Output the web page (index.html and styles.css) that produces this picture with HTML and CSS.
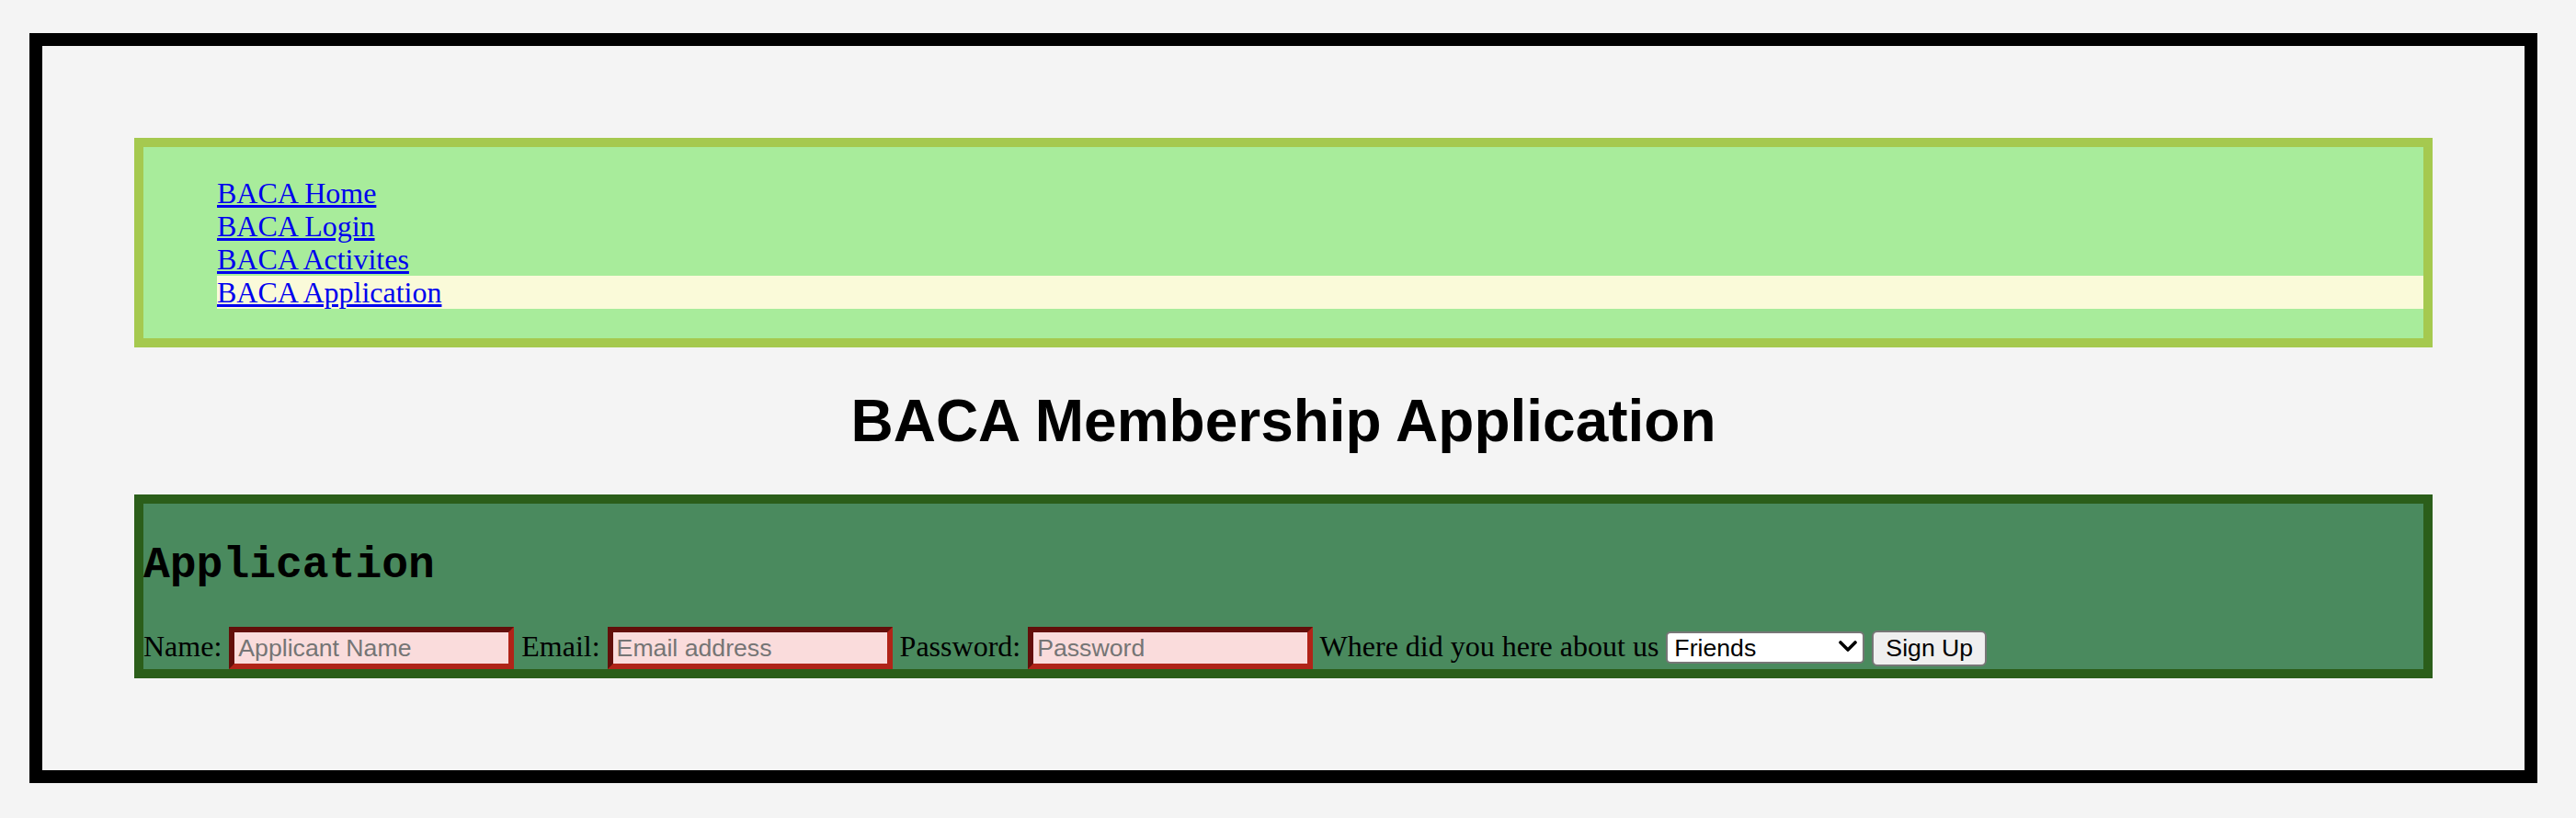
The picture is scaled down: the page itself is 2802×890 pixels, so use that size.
FILE: index.html
```html
<!DOCTYPE html>
<html lang="en">
<head>
<meta charset="utf-8">
<title>BACA Membership Application</title>
<link rel="stylesheet" href="styles.css">
</head>
<body>
<div class="page">
  <nav class="nav">
    <ul class="nav-list">
      <li class="nav-item"><a href="#">BACA Home</a></li>
      <li class="nav-item"><a href="#">BACA Login</a></li>
      <li class="nav-item"><a href="#">BACA Activites</a></li>
      <li class="nav-item nav-item-active"><a href="#">BACA Application</a></li>
    </ul>
  </nav>
  <h1 class="title">BACA Membership Application</h1>
  <section class="form-box">
    <h2 class="form-title">Application</h2>
    <form class="form-row">Name: <input class="field" type="text" placeholder="Applicant Name"> Email: <input class="field" type="email" placeholder="Email address"> Password: <input class="field" type="password" placeholder="Password"> Where did you here about us <span class="select-wrap"><select class="select"><option>Friends</option><option>Family</option><option>Internet</option></select><svg class="chevron" width="20" height="12" viewBox="0 0 20 12"><path d="M2 2 L10 10 L18 2" fill="none" stroke="#000" stroke-width="3.6" stroke-linecap="round" stroke-linejoin="round"/></svg></span> <button class="btn" type="button">Sign Up</button></form>
  </section>
</div>
</body>
</html>
```

FILE: styles.css
```css
html, body {
  margin: 0;
  padding: 0;
  background: #f4f4f4;
}

body {
  font-family: "Liberation Serif", "Times New Roman", serif;
  font-size: 32px;
  color: #000;
}

.page {
  margin: 36px 42px 38px 32px;
  border: 14px solid #000;
  padding: 100px;
}

.nav {
  background: #a8ec9b;
  border: 10px solid #a5c94f;
}

.nav-list {
  list-style: none;
  margin: 32px 0;
  padding: 0 0 0 80px;
}

.nav-item {
  line-height: 36px;
}

.nav-item a {
  color: #0000ee;
  text-decoration: underline;
}

.nav-item-active {
  background: #fafad9;
}

.title {
  font-family: "Liberation Sans", Arial, sans-serif;
  font-weight: bold;
  font-size: 64px;
  line-height: 74px;
  margin: 43px 0;
  text-align: center;
}

.form-box {
  background: #4a8a5e;
  border: 10px solid #2b5e1a;
}

.form-title {
  font-family: "Liberation Mono", "Courier New", monospace;
  font-weight: bold;
  font-size: 48px;
  line-height: 54px;
  margin: 40px 0;
}

.form-row {
  margin: 0;
  line-height: normal;
}

.field {
  box-sizing: border-box;
  width: 310px;
  height: 46px;
  padding: 2px 4px;
  margin: 0;
  border: 6px inset #b22222;
  border-top-color: #630f0a;
  border-left-color: #630f0a;
  border-right-color: #b02418;
  border-bottom-color: #b02418;
  border-style: solid;
  background: #fadcdc;
  font-family: "Liberation Sans", Arial, sans-serif;
  font-size: 26.67px;
  color: #000;
  vertical-align: baseline;
}

.field::placeholder {
  color: #757575;
}

.select-wrap {
  position: relative;
  display: inline-block;
}

.select {
  -webkit-appearance: none;
  appearance: none;
  box-sizing: border-box;
  width: 216px;
  height: 35px;
  margin: 0;
  padding: 0 30px 0 7px;
  background: #fff;
  border: 2px solid #767676;
  border-radius: 5px;
  font-family: "Liberation Sans", Arial, sans-serif;
  font-size: 26.67px;
  color: #000;
}

.chevron {
  position: absolute;
  right: 8px;
  top: 12px;
  pointer-events: none;
}

.btn {
  box-sizing: border-box;
  height: 39px;
  margin: 0;
  padding: 0 13px;
  background: #efefef;
  border: 2px solid #767676;
  border-radius: 6px;
  font-family: "Liberation Sans", Arial, sans-serif;
  font-size: 26.67px;
  color: #000;
}
```
